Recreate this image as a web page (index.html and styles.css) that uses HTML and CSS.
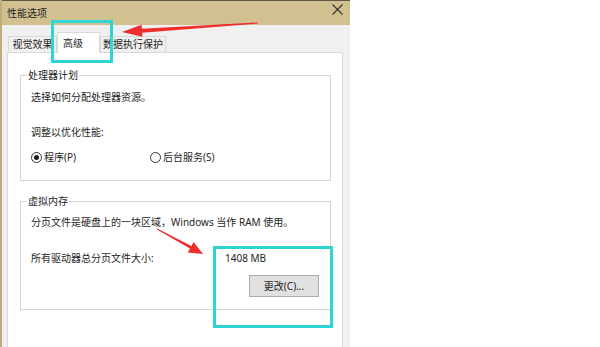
FILE: index.html
```html
<!DOCTYPE html>
<html lang="zh-CN">
<head>
    <meta charset="UTF-8">
    <title>性能选项</title>
    <link rel="stylesheet" href="styles.css">
</head>
<body>
    <div class="window">
        <div class="titlebar">
            <span class="title">性能选项</span>
            <svg class="close" width="11" height="11" viewBox="0 0 11 11">
                <path d="M0.5 0.5L10.5 10.5M10.5 0.5L0.5 10.5" stroke="#333" stroke-width="1.1"/>
            </svg>
        </div>

        <div class="content">
            <div class="tabs">
                <div class="tab tab-visual">视觉效果</div>
                <div class="tab active">高级</div>
                <div class="tab tab-dep">数据执行保护</div>
            </div>

            <div class="panel">
                <fieldset class="group group-cpu">
                    <legend>处理器计划</legend>
                    <p>选择如何分配处理器资源。</p>
                    <p class="sub">调整以优化性能:</p>
                    <div class="radios">
                        <label class="radio first checked"><span class="dot"></span>程序(P)</label>
                        <label class="radio"><span class="dot"></span>后台服务(S)</label>
                    </div>
                </fieldset>

                <fieldset class="group group-vm">
                    <legend>虚拟内存</legend>
                    <p>分页文件是硬盘上的一块区域，Windows 当作 RAM 使用。</p>
                    <div class="size-row">
                        <span>所有驱动器总分页文件大小:</span>
                        <span>1408 MB</span>
                    </div>
                    <div class="actions">
                        <button class="btn">更改(C)...</button>
                    </div>
                </fieldset>
            </div>
        </div>
    </div>

    <!-- annotations drawn over the screenshot -->
    <div class="mark mark-tab"></div>
    <div class="mark mark-size"></div>
    <svg class="arrows" width="600" height="347" viewBox="0 0 600 347">
        <polygon points="122,32 142.4,36.7 142.1,32.7 258,23.5 258,22.5 141.9,28.7 141.6,24.7" fill="#ee2d2d"/>
        <polygon points="203,254 187.8,252.6 190,248.6 156.8,229.4 157.2,228.6 191.4,246 193.6,242" fill="#ee2d2d"/>
    </svg>
</body>
</html>
```

FILE: styles.css
```css
* {
    margin: 0;
    padding: 0;
    box-sizing: border-box;
}

body {
    position: relative;
    width: 600px;
    height: 347px;
    overflow: hidden;
    background: #fff;
    font-family: "Noto Sans", "Noto Sans CJK SC", sans-serif;
    font-size: 10px;
    line-height: 14px;
    color: #1e1e1e;
}

.window {
    width: 350px;
    height: 347px;
    background: #f0f0f0;
    border-left: 2px solid #bfae7c;
    overflow: hidden;
}

.titlebar {
    height: 25px;
    border-top: 1px solid #5c5849;
    background: #d1c190;
    display: flex;
    align-items: center;
    justify-content: space-between;
    padding: 0 7px 1px 5px;
    color: #222;
}

.close {
    align-self: flex-start;
    margin-top: 3px;
}

.content {
    padding: 7px 0 0 5px;
}

.tabs {
    display: flex;
    align-items: flex-end;
    height: 20px;
    margin-left: 1px;
}

.tab {
    height: 16px;
    border: 1px solid #d9d9d9;
    border-bottom: none;
    background: #f0f0f0;
    text-align: center;
    line-height: 15px;
}

.tab-visual {
    width: 49px;
}

.tab-dep {
    width: 66px;
}

.tab.active {
    position: relative;
    z-index: 1;
    width: 43px;
    height: 21px;
    margin-bottom: -1px;
    padding-left: 5px;
    background: #fff;
    text-align: left;
    line-height: 20px;
}

.panel {
    width: 336px;
    height: 300px;
    background: #fff;
    border: 1px solid #d9d9d9;
    padding-top: 15px;
}

.group {
    margin: 0 11px 0 12px;
    border: 1px solid #d5d5d5;
    padding: 8px 11px 16px 10px;
}

.group legend {
    padding: 0 1px;
    margin-left: -4px;
    line-height: 14px;
}

.group-vm {
    margin-top: 13px;
    padding-top: 7px;
    padding-bottom: 12px;
}

.sub {
    margin-top: 21px;
}

.radios {
    display: flex;
    margin-top: 11px;
}

.radio {
    display: flex;
    align-items: center;
    gap: 2px;
}

.radio.first {
    width: 119px;
}

.dot {
    width: 11px;
    height: 11px;
    border: 1px solid #333;
    border-radius: 50%;
    display: flex;
    align-items: center;
    justify-content: center;
}

.radio.checked .dot::after {
    content: '';
    width: 5px;
    height: 5px;
    border-radius: 50%;
    background: #1e1e1e;
}

.size-row {
    display: grid;
    grid-template-columns: 194px auto;
    margin-top: 22px;
}

.actions {
    display: flex;
    justify-content: flex-end;
    margin-top: 10px;
}

.btn {
    width: 70px;
    height: 22px;
    border: 1px solid #adadad;
    background: #e1e1e1;
    font: inherit;
    color: #1e1e1e;
    line-height: 20px;
}

.mark {
    position: absolute;
    border: 3px solid #2fd5d3;
}

.mark-tab {
    left: 51px;
    top: 20px;
    width: 62px;
    height: 43px;
}

.mark-size {
    left: 213px;
    top: 246px;
    width: 120px;
    height: 82px;
}

.arrows {
    position: absolute;
    left: 0;
    top: 0;
    pointer-events: none;
}
```
